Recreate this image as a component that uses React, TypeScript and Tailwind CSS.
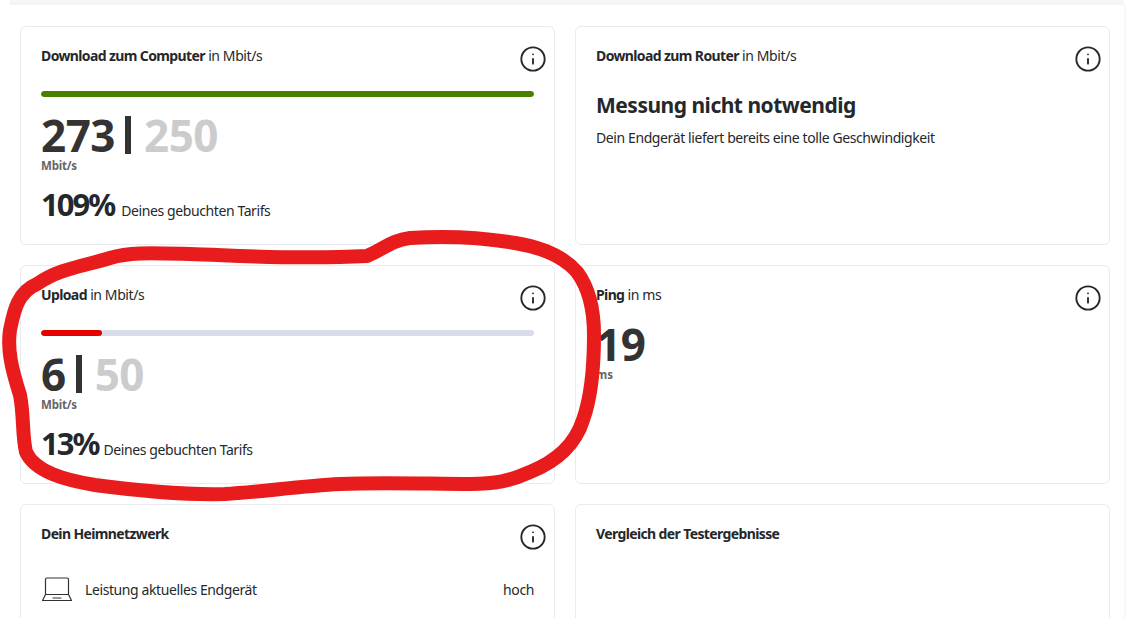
import { Info } from 'lucide-react'

const font = { fontFamily: '"Noto Sans", "Open Sans", sans-serif' }

function CardTitle({ bold, rest, info = true }: { bold: string; rest?: string; info?: boolean }) {
  return (
    <div className="flex h-[27px] items-start justify-between">
      <p className="text-[14px] leading-[20px] tracking-[-0.4px] text-[#25282b]">
        <span className="font-bold tracking-[-0.62px]">{bold}</span>
        {rest && <span> {rest}</span>}
      </p>
      {info && <Info className="w-[28px] h-[28px] -mr-[13px] -mt-[1px] text-[#25282b]" strokeWidth={1.6} />}
    </div>
  )
}

function SpeedCard({
  title,
  value,
  max,
  percent,
  fill,
  color,
  gap,
}: {
  title: string
  value: string
  max: string
  percent: string
  fill: string
  color: string
  gap: string
}) {
  return (
    <div className="h-[219px] rounded-md border border-[#e8ebf2] bg-white pt-[19px] px-[20px]">
      <CardTitle bold={title} rest="in Mbit/s" />
      <div className="mt-[18px] h-[6px] rounded-full bg-[#d8dde9] overflow-hidden">
        <div className={`h-full rounded-full ${color} ${fill}`} />
      </div>
      <div className="mt-[18px] flex items-center text-[44px] leading-[40px] font-bold tracking-[-0.5px] text-[#333333]">
        <span>{value}</span>
        <span className="ml-[10px] h-[38px] w-[6px] bg-[#333333]" />
        <span className="ml-[13px] text-[#cccccc]">{max}</span>
      </div>
      <p className="mt-[4px] text-[11.5px] leading-[14px] font-bold text-[#666666] tracking-[-0.2px]">Mbit/s</p>
      <div className="mt-[13px] flex items-baseline text-[#25282b]">
        <span className="text-[31px] leading-[36px] font-bold tracking-[-2px]">{percent}</span>
        <span className={`${gap} text-[14px] tracking-[-0.4px]`}>Deines gebuchten Tarifs</span>
      </div>
    </div>
  )
}

export default function App() {
  return (
    <div className="relative h-[618px] w-[1136px] overflow-hidden bg-white" style={font}>
      <div className="h-[5px] ml-[10px] mr-[12px] bg-gradient-to-b from-[#f8f8f8] to-[#f2f2f2]" />
      <div className="h-[613px] w-[1126px] border-r-[2px] border-[#f7f7f7]">
        <div className="grid grid-cols-[535px_535px] gap-[20px] pl-[20px] pt-[21px]">
          <SpeedCard title="Download zum Computer" value="273" max="250" percent="109%" fill="w-full" color="bg-[#4a8000]" gap="ml-[7px]" />

          <div className="h-[219px] rounded-md border border-[#e8ebf2] bg-white pt-[19px] px-[20px]">
            <CardTitle bold="Download zum Router" rest="in Mbit/s" />
            <h2 className="mt-[17px] text-[21px] leading-[30px] font-bold tracking-[-0.5px] text-[#25282b]">Messung nicht notwendig</h2>
            <p className="mt-[8px] text-[14px] leading-[20px] tracking-[-0.4px] text-[#25282b]">
              Dein Endgerät liefert bereits eine tolle Geschwindigkeit
            </p>
          </div>

          <SpeedCard title="Upload" value="6" max="50" percent="13%" fill="w-[61px]" color="bg-[#e60000]" gap="ml-[5px]" />

          <div className="h-[219px] rounded-md border border-[#e8ebf2] bg-white pt-[19px] px-[20px]">
            <CardTitle bold="Ping" rest="in ms" />
            <div className="mt-[12px] text-[44px] leading-[40px] font-bold tracking-[-0.5px] text-[#333333]">19</div>
            <p className="mt-[4px] text-[11.5px] leading-[14px] font-bold text-[#666666]">ms</p>
          </div>

          <div className="h-[219px] rounded-md border border-[#e8ebf2] bg-white pt-[19px] px-[20px]">
            <CardTitle bold="Dein Heimnetzwerk" />
            <div className="mt-[25px] flex items-center justify-between text-[14px] tracking-[-0.4px] text-[#25282b]">
              <div className="flex items-center">
                <svg viewBox="0 0 32 26" className="h-[26px] w-[32px]" fill="none" stroke="#333333" strokeWidth="1.2" strokeLinejoin="round" strokeLinecap="round">
                  <path d="M4.500 18.500V3.500a1.500 1.500 0 0 1 1.500-1.500h20a1.500 1.500 0 0 1 1.500 1.500v15" />
                  <path d="M4.500 18.500h23l3 6H1.500z" />
                  <path d="M12 22h8" />
                </svg>
                <span className="ml-[12px]">Leistung aktuelles Endgerät</span>
              </div>
              <span>hoch</span>
            </div>
          </div>

          <div className="h-[219px] rounded-md border border-[#e8ebf2] bg-white pt-[19px] px-[20px]">
            <CardTitle bold="Vergleich der Testergebnisse" info={false} />
          </div>
        </div>
      </div>

      {/* hand drawn marker round the upload card */}
      <svg viewBox="0 0 1136 618" className="absolute inset-0 h-[618px] w-[1136px] pointer-events-none" fill="none">
        <path
          d="M367 256 C382 250 392 240 410 238 C440 236 480 237 515 243 C545 248 565 258 577 272 C589 288 594 310 594 335 C594 365 592 395 583 420 C575 445 555 462 530 472 C510 481 495 484 470 484 C430 484 385 482 340 484 C300 486 260 492 225 494 C185 495 140 491 95 485 C65 480 35 472 26 452 C22 435 24 415 20 395 C12 370 7 350 10 330 C14 310 18 292 37 284 C60 268 85 266 110 258 C130 252 150 253 190 254 C230 255 290 260 367 256 Z"
          stroke="#e81c1c"
          strokeWidth="14"
          strokeLinejoin="round"
          strokeLinecap="round"
        />
      </svg>
    </div>
  )
}
